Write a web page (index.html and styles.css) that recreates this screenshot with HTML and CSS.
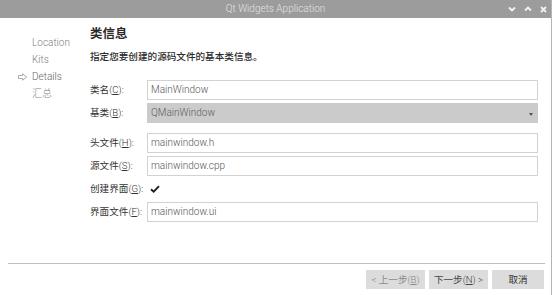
FILE: index.html
```html
<!DOCTYPE html>
<html lang="zh">
<head>
<meta charset="utf-8">
<title>Qt Widgets Application</title>
<link rel="stylesheet" href="styles.css">
</head>
<body>
<div class="window">
  <div class="titlebar">
    <span class="title">Qt Widgets Application</span>
    <div class="controls">
      <svg class="ctl" width="8" height="6" viewBox="0 0 8 6"><path d="M1 1.5 L4 4.5 L7 1.5" fill="none" stroke="#f2f2f2" stroke-width="1.8"/></svg>
      <svg class="ctl" width="8" height="6" viewBox="0 0 8 6"><path d="M1 4.5 L4 1.5 L7 4.5" fill="none" stroke="#f2f2f2" stroke-width="1.8"/></svg>
      <svg class="ctl" width="7" height="7" viewBox="0 0 7 7"><path d="M1 1 L6 6 M6 1 L1 6" fill="none" stroke="#f2f2f2" stroke-width="1.8"/></svg>
    </div>
  </div>
  <div class="body">
    <ul class="nav">
      <li class="nav-item"><span class="marker"></span>Location</li>
      <li class="nav-item"><span class="marker"></span>Kits</li>
      <li class="nav-item current"><span class="marker"><svg width="10" height="8" viewBox="0 0 10 8"><path d="M0.5 2.5 H4.5 V0.8 L8.8 4 L4.5 7.2 V5.5 H0.5 Z" fill="none" stroke="#a8a8a8" stroke-width="1"/></svg></span>Details</li>
      <li class="nav-item"><span class="marker"></span>汇总</li>
    </ul>
    <div class="main">
      <h1 class="heading">类信息</h1>
      <p class="subtitle">指定您要创建的源码文件的基本类信息。</p>
      <div class="form">
        <label class="label">类名<span class="lat">(<u>C</u>):</span></label>
        <div class="field">MainWindow</div>
        <label class="label">基类<span class="lat">(<u>B</u>):</span></label>
        <div class="field combo">QMainWindow<span class="caret"></span></div>
        <div class="spacer"></div>
        <label class="label">头文件<span class="lat">(<u>H</u>):</span></label>
        <div class="field">mainwindow.h</div>
        <label class="label">源文件<span class="lat">(<u>S</u>):</span></label>
        <div class="field">mainwindow.cpp</div>
        <label class="label">创建界面<span class="lat">(<u>G</u>):</span></label>
        <div class="check-cell"><svg width="10" height="8" viewBox="0 0 10 8"><path d="M1 4.2 L3.7 6.7 L9 1.2" fill="none" stroke="#222" stroke-width="1.9"/></svg></div>
        <label class="label">界面文件<span class="lat">(<u>F</u>):</span></label>
        <div class="field">mainwindow.ui</div>
      </div>
    </div>
  </div>
  <div class="footer">
    <div class="buttons">
      <button class="btn disabled"><span class="lat">&lt;</span> 上一步<span class="lat">(<u>B</u>)</span></button>
      <button class="btn">下一步<span class="lat">(<u>N</u>) &gt;</span></button>
      <button class="btn cancel">取消</button>
    </div>
  </div>
</div>
</body>
</html>
```
FILE: styles.css
```css
html, body {
  margin: 0;
  padding: 0;
  background: #ffffff;
}
body {
  font-family: Roboto, "Noto Sans CJK SC", sans-serif;
  font-size: 10px;
  color: #333;
}
.lat { font-weight: 300; }
.window {
  width: 551px;
  height: 295px;
  border-right: 1px solid #b4b4b4;
  display: flex;
  flex-direction: column;
}
.titlebar {
  height: 18px;
  background: #9c9c9c;
  display: flex;
  align-items: center;
  justify-content: center;
  position: relative;
  flex: none;
}
.title {
  color: #e2e2e2;
  font-size: 10px;
  font-weight: 300;
  line-height: 18px;
}
.controls {
  position: absolute;
  right: 4px;
  top: 0;
  height: 18px;
  display: flex;
  align-items: center;
  gap: 8px;
}
.ctl { display: block; }
.body {
  flex: 1;
  display: flex;
  min-height: 0;
}
.nav {
  list-style: none;
  margin: 0;
  padding: 16px 0 0 18px;
  width: 72px;
  flex: none;
}
.nav-item {
  display: flex;
  align-items: center;
  height: 17px;
  line-height: 17px;
  color: #808080;
  font-size: 10px;
  font-weight: 300;
}
.nav-item.current { color: #666; }
.marker {
  width: 14px;
  flex: none;
  display: flex;
  align-items: center;
}
.marker svg { display: block; }
.main {
  flex: 1;
  padding: 8px 13px 0 0;
}
.heading {
  margin: 0;
  font-size: 12.5px;
  font-weight: bold;
  line-height: 16px;
  color: #2a2a2a;
}
.subtitle {
  margin: 8px 0 0 0;
  line-height: 14px;
  font-size: 9.6px;
  color: #2a2a2a;
  font-weight: 500;
}
.form {
  margin-top: 16px;
  display: grid;
  grid-template-columns: 57px 1fr;
  row-gap: 3px;
  align-items: center;
}
.label {
  color: #333;
  font-size: 9.6px;
  line-height: 20px;
  white-space: nowrap;
}
.label u { text-decoration-thickness: 1px; text-underline-offset: 1px; }
.field {
  height: 20px;
  box-sizing: border-box;
  border: 1px solid #d2d2d2;
  background: #fff;
  color: #555;
  padding: 0 3px;
  line-height: 18px;
  font-size: 10px;
  font-weight: 300;
  position: relative;
}
.field.combo {
  background: #cbcbcb;
  border-color: #cbcbcb;
  color: #5a5a5a;
}
.caret {
  position: absolute;
  right: 4px;
  top: 9px;
  width: 0;
  height: 0;
  border-left: 2.5px solid transparent;
  border-right: 2.5px solid transparent;
  border-top: 3px solid #555;
}
.spacer {
  grid-column: 1 / -1;
  height: 4px;
}
.check-cell {
  height: 15px;
  display: flex;
  align-items: center;
  padding-left: 3px;
}
.footer {
  flex: none;
  margin: 0 6px 0 8px;
  border-top: 1px solid #bdbdbd;
  padding: 6px 1px 6px 0;
}
.buttons {
  display: flex;
  justify-content: flex-end;
  gap: 4px;
}
.btn {
  width: 59px;
  height: 19px;
  border: none;
  background: #dcdcdc;
  font-family: Roboto, "Noto Sans CJK SC", sans-serif;
  font-size: 9.6px;
  color: #444;
  padding: 0;
  line-height: 19px;
}
.btn.disabled { color: #8a8a8a; }
.btn.cancel { width: 52px; color: #333; }
```
